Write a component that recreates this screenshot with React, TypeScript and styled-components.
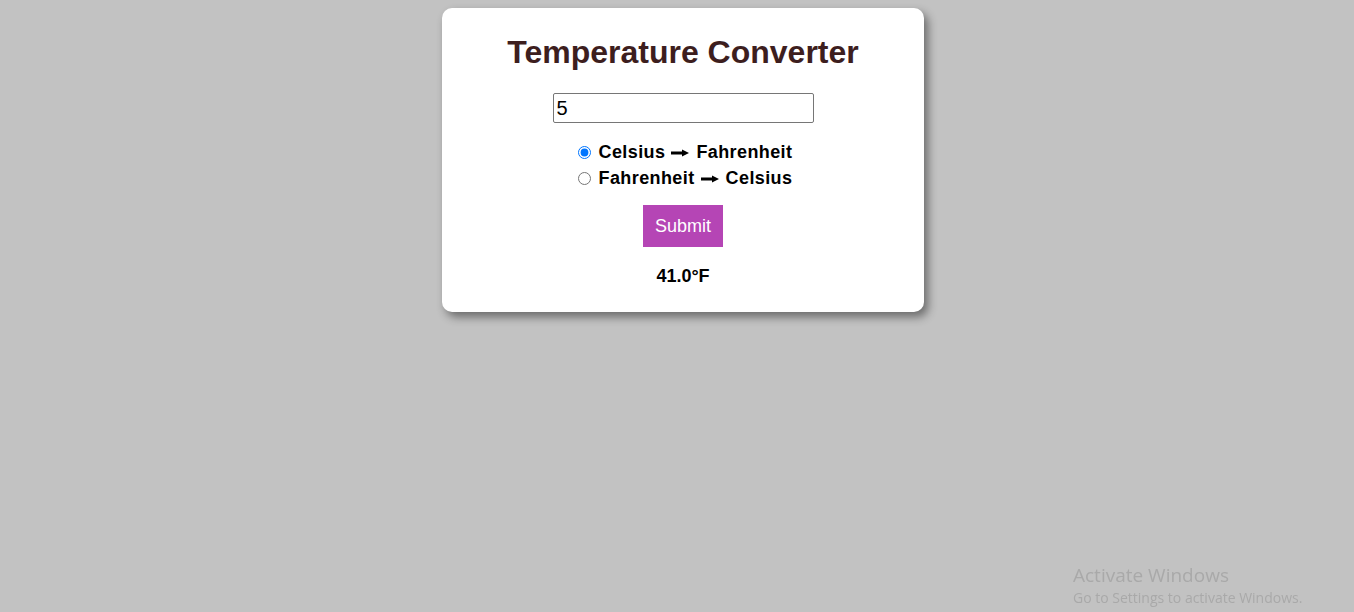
import React, { useState } from "react";
import styled, { createGlobalStyle } from "styled-components";

const GlobalStyle = createGlobalStyle`
  html, body {
    margin: 0;
    padding: 0;
    background: #c2c2c2;
    font-family: "Liberation Sans", Arial, sans-serif;
  }
`;

const Page = styled.div`
  min-height: 612px;
  display: flex;
  justify-content: center;
  align-items: flex-start;
  padding: 8px 0 0 12px;
  box-sizing: border-box;
`;

const Card = styled.div`
  width: 482px;
  height: 304px;
  box-sizing: border-box;
  background: #ffffff;
  border-radius: 10px;
  box-shadow: 4px 5px 10px rgba(0, 0, 0, 0.45);
  padding: 26px 0 0 0;
  display: flex;
  flex-direction: column;
  align-items: center;
`;

const Title = styled.h1`
  margin: 0;
  font-size: 32px;
  font-weight: bold;
  line-height: 37px;
  color: #3d1e1e;
`;

const NumberInput = styled.input`
  margin-top: 22px;
  width: 261px;
  height: 30px;
  box-sizing: border-box;
  border: 1px solid #767676;
  border-radius: 2px;
  padding: 0 3px;
  font-family: "Liberation Sans", Arial, sans-serif;
  font-size: 20px;
  color: #000;
  outline: none;
`;

const RadioGroup = styled.div`
  margin-top: 16px;
  display: flex;
  flex-direction: column;
  align-items: flex-start;
  margin-left: 4px;
`;

const RadioRow = styled.label`
  display: flex;
  align-items: center;
  height: 26px;
  font-size: 18px;
  font-weight: bold;
  letter-spacing: 0.4px;
  color: #000;
  cursor: pointer;
`;

const Radio = styled.input`
  width: 13px;
  height: 13px;
  margin: 0 8px 0 0;
  accent-color: #0075ff;
`;

const ArrowIcon = styled.svg`
  width: 18px;
  height: 8px;
  margin: 1px 7px 0 6px;
  flex: none;
`;

const Arrow = () => (
  <ArrowIcon viewBox="0 0 18 8" aria-hidden="true">
    <rect x="0" y="2.5" width="12" height="3" fill="#000" />
    <polygon points="11,0.5 18,4 11,7.5" fill="#000" />
  </ArrowIcon>
);

const SubmitButton = styled.button`
  margin-top: 14px;
  width: 80px;
  height: 42px;
  border: none;
  border-radius: 0;
  background: #b545b5;
  color: #ffffff;
  font-family: "Liberation Sans", Arial, sans-serif;
  font-size: 18px;
  padding: 0;
  cursor: pointer;
`;

const Result = styled.div`
  margin-top: 19px;
  font-size: 18px;
  font-weight: bold;
  line-height: 21px;
  color: #000;
`;

const Watermark = styled.div`
  position: fixed;
  left: 1073px;
  top: 563px;
  font-family: "Open Sans", "Noto Sans", sans-serif;
  color: #a9a9a9;
  pointer-events: none;
`;

const WatermarkTitle = styled.div`
  font-size: 19px;
  line-height: 24px;
`;

const WatermarkSub = styled.div`
  font-size: 14px;
  line-height: 22px;
`;

export default function App() {
  const [value, setValue] = useState("5");
  const [mode, setMode] = useState<"cf" | "fc">("cf");
  const [result, setResult] = useState("41.0°F");

  const submit = () => {
    const n = parseFloat(value);
    if (isNaN(n)) return;
    if (mode === "cf") setResult(((n * 9) / 5 + 32).toFixed(1) + "°F");
    else setResult((((n - 32) * 5) / 9).toFixed(1) + "°C");
  };

  return (
    <>
      <GlobalStyle />
      <Page>
        <Card>
          <Title>Temperature Converter</Title>
          <NumberInput
            type="text"
            value={value}
            onChange={(e) => setValue(e.target.value)}
          />
          <RadioGroup>
            <RadioRow>
              <Radio
                type="radio"
                name="mode"
                checked={mode === "cf"}
                onChange={() => setMode("cf")}
              />
              Celsius
              <Arrow />
              Fahrenheit
            </RadioRow>
            <RadioRow>
              <Radio
                type="radio"
                name="mode"
                checked={mode === "fc"}
                onChange={() => setMode("fc")}
              />
              Fahrenheit
              <Arrow />
              Celsius
            </RadioRow>
          </RadioGroup>
          <SubmitButton onClick={submit}>Submit</SubmitButton>
          <Result>{result}</Result>
        </Card>
      </Page>
      <Watermark>
        <WatermarkTitle>Activate Windows</WatermarkTitle>
        <WatermarkSub>Go to Settings to activate Windows.</WatermarkSub>
      </Watermark>
    </>
  );
}
